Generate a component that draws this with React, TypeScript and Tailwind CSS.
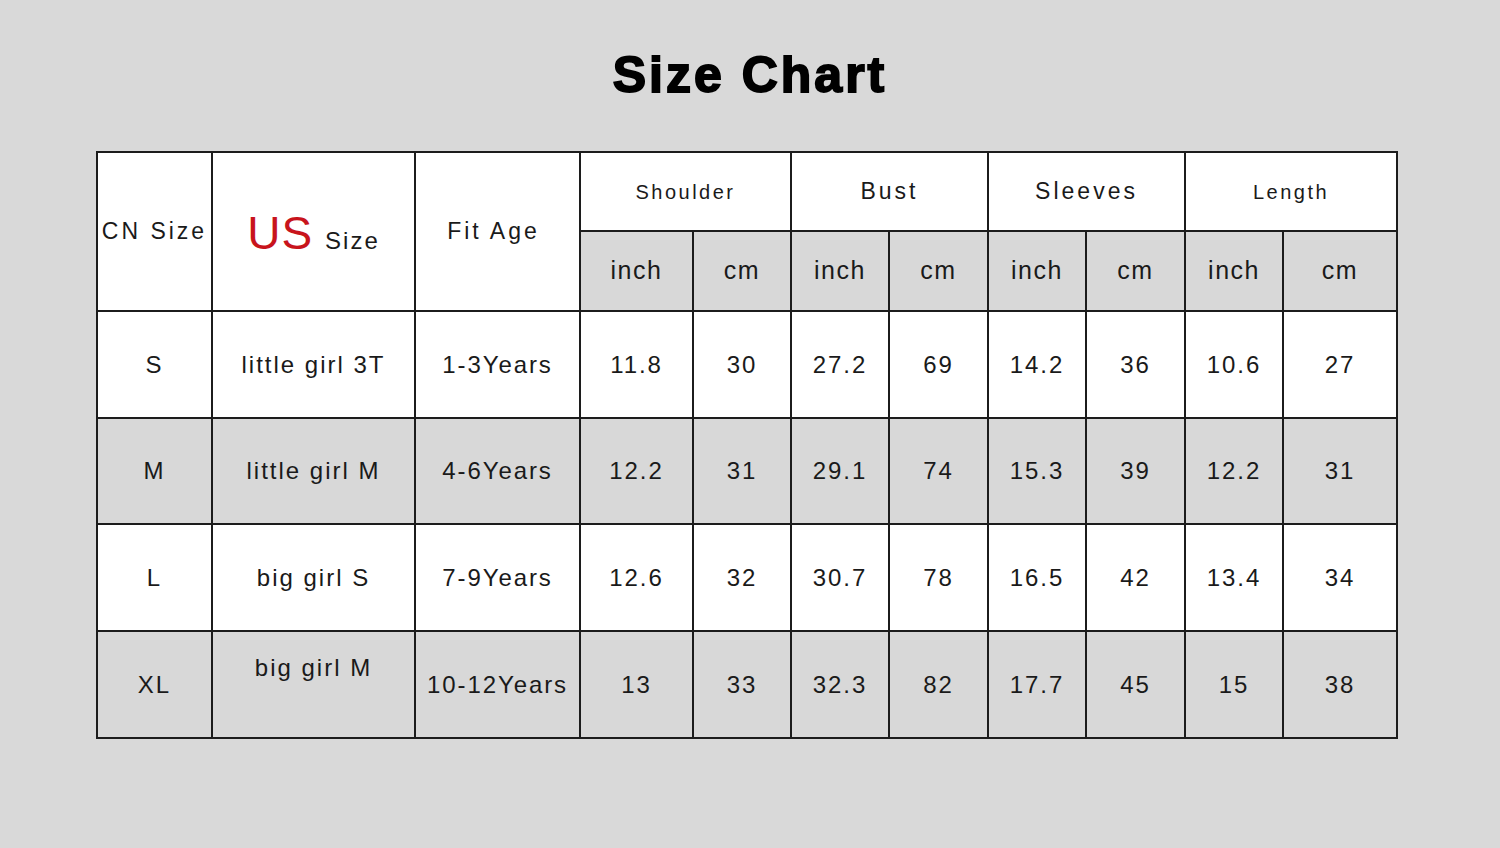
const font = { fontFamily: '"Liberation Sans", Arial, sans-serif' };

type Row = {
  cn: string;
  us: string;
  age: string;
  vals: string[];
  gray: boolean;
  h: string;
};

const rows: Row[] = [
  { cn: 'S', us: 'little girl 3T', age: '1-3Years', vals: ['11.8', '30', '27.2', '69', '14.2', '36', '10.6', '27'], gray: false, h: 'h-[107px]' },
  { cn: 'M', us: 'little girl M', age: '4-6Years', vals: ['12.2', '31', '29.1', '74', '15.3', '39', '12.2', '31'], gray: true, h: 'h-[106px]' },
  { cn: 'L', us: 'big girl S', age: '7-9Years', vals: ['12.6', '32', '30.7', '78', '16.5', '42', '13.4', '34'], gray: false, h: 'h-[107px]' },
  { cn: 'XL', us: 'big girl M', age: '10-12Years', vals: ['13', '33', '32.3', '82', '17.7', '45', '15', '38'], gray: true, h: 'h-[107px]' },
];

const widths = [115, 203, 165, 113, 98, 98, 99, 98, 99, 98, 114];

const cell = 'border-2 border-[#1c1c1c] p-0 text-center align-middle';

export default function App() {
  return (
    <div className="min-h-[848px] w-full bg-[#d9d9d9] text-[#1a1a1a]" style={font}>
      <div className="flex h-[151px] justify-center pt-[50px]">
        <h1 className="text-[50px] font-bold leading-none tracking-[3px] text-black [-webkit-text-stroke:1.8px_black]">
          Size Chart
        </h1>
      </div>

      <table className="ml-[96px] w-[1300px] table-fixed border-collapse">
        <colgroup>
          {widths.map((w, i) => (
            <col key={i} style={{ width: w }} />
          ))}
        </colgroup>
        <thead>
          <tr className="h-[79px] bg-white">
            <th rowSpan={2} className={`${cell} text-[23px] font-normal tracking-[3px]`}>
              CN Size
            </th>
            <th rowSpan={2} className={`${cell} font-normal`}>
              <div className="flex items-baseline justify-center gap-[12px] pt-[2px]">
                <span className="text-[46px] leading-none tracking-[1px] text-[#c8141c]">US</span>
                <span className="text-[24px] leading-none tracking-[2px]">Size</span>
              </div>
            </th>
            <th rowSpan={2} className={`${cell} pr-[8px] text-[23px] font-normal tracking-[3px]`}>
              Fit Age
            </th>
            <th colSpan={2} className={`${cell} text-[20px] font-normal tracking-[2.5px]`}>
              Shoulder
            </th>
            <th colSpan={2} className={`${cell} text-[23px] font-normal tracking-[3px]`}>
              Bust
            </th>
            <th colSpan={2} className={`${cell} text-[23px] font-normal tracking-[3px]`}>
              Sleeves
            </th>
            <th colSpan={2} className={`${cell} text-[20px] font-normal tracking-[2.5px]`}>
              Length
            </th>
          </tr>
          <tr className="h-[80px]">
            {['inch', 'cm', 'inch', 'cm', 'inch', 'cm', 'inch', 'cm'].map((t, i) => (
              <th key={i} className={`${cell} bg-[#d8d8d8] text-[25px] font-normal tracking-[1.5px]`}>
                {t}
              </th>
            ))}
          </tr>
        </thead>
        <tbody>
          {rows.map((r) => (
            <tr key={r.cn} className={`${r.h} ${r.gray ? 'bg-[#d8d8d8]' : 'bg-white'}`}>
              <td className={`${cell} text-[24px] tracking-[2px]`}>{r.cn}</td>
              <td className={`${cell} text-[24px] tracking-[2px]`}>
                <div className={r.cn === 'XL' ? 'pb-[34px]' : ''}>{r.us}</div>
              </td>
              <td className={`${cell} text-[24px] tracking-[1.9px]`}>{r.age}</td>
              {r.vals.map((v, i) => (
                <td key={i} className={`${cell} text-[24px] tracking-[1.9px]`}>
                  {v}
                </td>
              ))}
            </tr>
          ))}
        </tbody>
      </table>
    </div>
  );
}
